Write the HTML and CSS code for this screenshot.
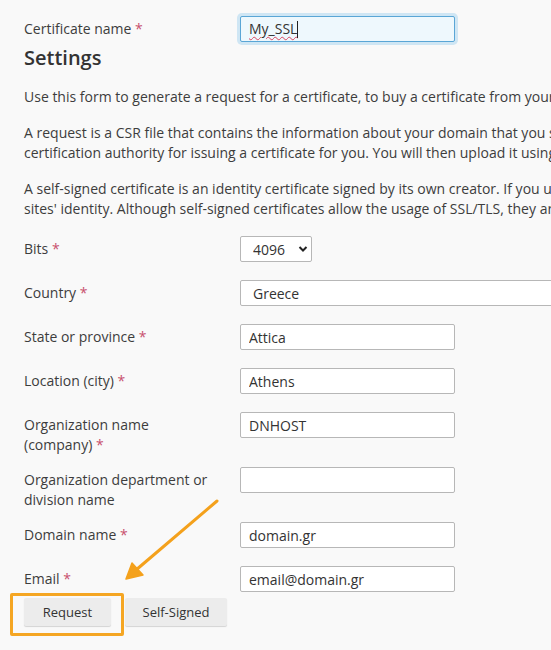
FILE: index.html
```html
<!DOCTYPE html>
<html lang="en">
<head>
<meta charset="utf-8">
<title>Add SSL/TLS Certificate</title>
<link rel="stylesheet" href="styles.css">
</head>
<body>
<div class="page">
  <form class="cert-form">
    <div class="row row-name">
      <label class="label">Certificate name <span class="req">*</span></label>
      <div class="control">
        <div class="field field-focused"><span class="misspelt">My_SSL</span><span class="caret"></span></div>
      </div>
    </div>

    <h2 class="section-title">Settings</h2>

    <p class="hint">Use this form to generate a request for a certificate, to buy a certificate from your provider, or to generate a self-signed certificate.</p>
    <p class="hint">A request is a CSR file that contains the information about your domain that you specify in the form. You can submit the request to a<br>certification authority for issuing a certificate for you. You will then upload it using the Upload certificate form.</p>
    <p class="hint">A self-signed certificate is an identity certificate signed by its own creator. If you use such certificates, visitors will not be able to verify your<br>sites' identity. Although self-signed certificates allow the usage of SSL/TLS, they are not trusted by browsers.</p>

    <div class="row">
      <label class="label">Bits <span class="req">*</span></label>
      <div class="control">
        <div class="select select-bits">
          <select><option>4096</option></select>
          <svg class="chevron" viewBox="0 0 10 8" width="10" height="8"><path d="M1.5 2 L5 5.5 L8.5 2" fill="none" stroke="#222" stroke-width="2"/></svg>
        </div>
      </div>
    </div>

    <div class="row">
      <label class="label">Country <span class="req">*</span></label>
      <div class="control">
        <div class="select select-country">
          <select><option>Greece</option></select>
        </div>
      </div>
    </div>

    <div class="row">
      <label class="label">State or province <span class="req">*</span></label>
      <div class="control"><input class="field" type="text" value="Attica"></div>
    </div>

    <div class="row">
      <label class="label">Location (city) <span class="req">*</span></label>
      <div class="control"><input class="field" type="text" value="Athens"></div>
    </div>

    <div class="row">
      <label class="label">Organization name (company) <span class="req">*</span></label>
      <div class="control"><input class="field" type="text" value="DNHOST"></div>
    </div>

    <div class="row">
      <label class="label">Organization department or division name</label>
      <div class="control"><input class="field" type="text" value=""></div>
    </div>

    <div class="row">
      <label class="label">Domain name <span class="req">*</span></label>
      <div class="control"><input class="field" type="text" value="domain.gr"></div>
    </div>

    <div class="row row-last">
      <label class="label">Email <span class="req">*</span></label>
      <div class="control"><input class="field" type="text" value="email@domain.gr"></div>
    </div>

    <div class="buttons">
      <button type="button" class="btn btn-request">Request</button>
      <button type="button" class="btn btn-self">Self-Signed</button>
    </div>
  </form>

  <!-- annotation: highlight around the Request button and arrow pointing at it -->
  <div class="callout-box"></div>
  <svg class="callout-arrow" width="551" height="650" viewBox="0 0 551 650">
    <line x1="217" y1="501" x2="136" y2="570" stroke="#f4a11c" stroke-width="3" stroke-linecap="round"/>
    <polygon points="126,579 132,563 143,575" fill="#f4a11c" stroke="#f4a11c" stroke-width="1.5" stroke-linejoin="round"/>
  </svg>
</div>
</body>
</html>
```

FILE: styles.css
```css
html, body {
  margin: 0;
  padding: 0;
  background: #f9f9f9;
  overflow: hidden;
}

body {
  font-family: "Open Sans", "DejaVu Sans", sans-serif;
  font-size: 14px;
  color: #3d3d3d;
}

.page {
  position: relative;
  width: 551px;
  height: 650px;
  overflow: hidden;
}

.cert-form {
  padding: 16px 0 0 24px;
  width: 1000px;
}

.row {
  display: grid;
  grid-template-columns: 216px auto;
  align-items: start;
  margin-bottom: 12px;
}

.row-last {
  margin-bottom: 0;
}

.label {
  width: 188px;
  padding-top: 3px;
  line-height: 20px;
}

.req {
  color: #c8506e;
}

.control {
  padding-bottom: 6px;
}

.field {
  box-sizing: border-box;
  width: 215px;
  height: 26px;
  margin: 0;
  padding: 0 8px;
  border: 1px solid #b7b7b7;
  border-radius: 2px;
  background: #fff;
  font: inherit;
  color: #333;
  line-height: 24px;
  outline: none;
}

.field-focused {
  display: flex;
  align-items: center;
  border-color: #5aa6d6;
  background: #eef8fd;
  box-shadow: 0 0 0 3px rgba(130, 195, 235, 0.35);
}

.misspelt {
  text-decoration: underline wavy #d9455f;
  text-decoration-thickness: 1px;
  text-underline-offset: 2px;
}

.caret {
  display: inline-block;
  width: 1px;
  height: 17px;
  background: #222;
}

.row-name {
  margin-bottom: 0;
}

.row-name .control {
  padding-bottom: 0;
}

.section-title {
  margin: 3px 0 16px;
  font-size: 20px;
  font-weight: 600;
  line-height: 26px;
  color: #333;
}

.hint {
  margin: 0 0 16px;
  line-height: 20px;
  white-space: nowrap;
}

.hint:last-of-type {
  margin-bottom: 17px;
}

.select {
  position: relative;
}

.select select {
  box-sizing: border-box;
  height: 26px;
  margin: 0;
  padding: 0 12px;
  border: 1px solid #b7b7b7;
  border-radius: 2px;
  background: #fff;
  font: inherit;
  color: #333;
  -webkit-appearance: none;
  appearance: none;
  outline: none;
}

.select-bits select {
  width: 72px;
}

.select-country select {
  width: 400px;
}

.chevron {
  position: absolute;
  left: 58px;
  top: 9px;
  pointer-events: none;
}

.buttons {
  display: flex;
  gap: 14px;
}

.btn {
  box-sizing: border-box;
  height: 28px;
  padding: 0;
  border: none;
  border-radius: 2px;
  background: #ececec;
  box-shadow: 0 1px 1px rgba(0, 0, 0, 0.15);
  font: inherit;
  font-size: 13px;
  color: #333;
}

.btn-request {
  width: 87px;
}

.btn-self {
  width: 102px;
}

.callout-box {
  position: absolute;
  left: 10px;
  top: 593px;
  width: 108px;
  height: 37px;
  border: 3px solid #f5a623;
  border-radius: 2px;
}

.callout-arrow {
  position: absolute;
  left: 0;
  top: 0;
  pointer-events: none;
}
```
